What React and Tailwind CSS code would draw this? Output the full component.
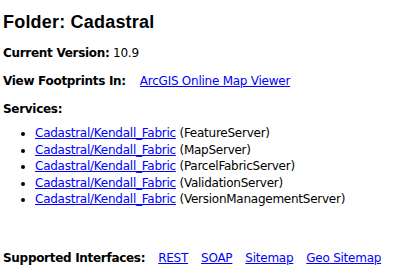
const services = [
  "FeatureServer",
  "MapServer",
  "ParcelFabricServer",
  "ValidationServer",
  "VersionManagementServer",
];

const interfaces = ["REST", "SOAP", "Sitemap", "Geo Sitemap"];

export default function App() {
  return (
    <div className="min-h-[276px] w-[400px] bg-white px-[3px] pt-[11px] text-[12px] leading-[17px] tracking-[-0.25px] text-black [font-family:'DejaVu_Sans',Verdana,sans-serif]">
      <h2 className="text-[18px] font-bold leading-[22px] tracking-[0.2px] [font-family:'Liberation_Sans',Arial,sans-serif]">
        Folder: Cadastral
      </h2>

      <div className="mt-[12px]">
        <b className="tracking-[-0.3px]">Current Version:</b> 10.9
      </div>

      <div className="mt-[11px]">
        <b className="tracking-[-0.3px]">View Footprints In:</b>
        <a href="#" className="ml-[14px] text-[#0000ff] underline">
          ArcGIS Online Map Viewer
        </a>
      </div>

      <div className="mt-[11px] font-bold tracking-[-0.3px]">Services:</div>

      <ul className="mt-[7px] list-disc pl-[32px] leading-[16.5px]">
        {services.map((s) => (
          <li key={s}>
            <a href="#" className="text-[#0000ff] underline">
              Cadastral/Kendall_Fabric
            </a>{" "}
            ({s})
          </li>
        ))}
      </ul>

      <div className="mt-[42px] flex">
        <b className="tracking-[-0.3px]">Supported Interfaces:</b>
        <div className="ml-[13px] flex gap-[13px]">
          {interfaces.map((i) => (
            <a key={i} href="#" className="text-[#0000ff] underline">
              {i}
            </a>
          ))}
        </div>
      </div>
    </div>
  );
}
